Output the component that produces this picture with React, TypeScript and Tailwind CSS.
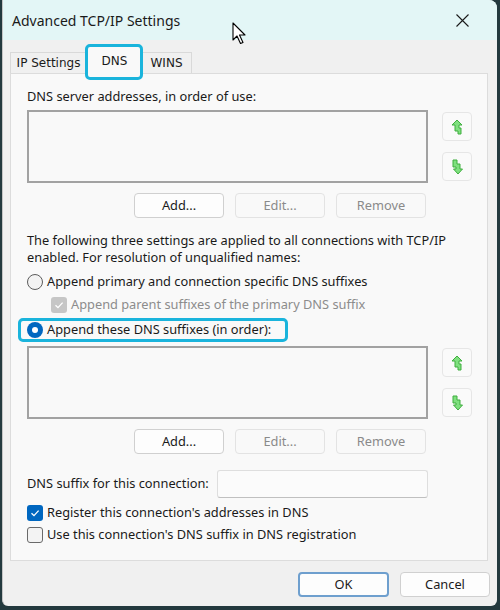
import React from "react";

const ui = { fontFamily: '"Noto Sans", "Open Sans", sans-serif' };
const tabFont = { fontFamily: '"DejaVu Sans", "Liberation Sans", sans-serif' };

function UpIcon() {
  return (
    <svg width="12" height="16" viewBox="0 0 12 16">
      <path d="M6 1 L11 6 L8 6 L8 9 L10 9 L10 15 L7 15 L7 12 L4 12 L4 6 L1 6 Z" fill="#7fe07f" stroke="#3fae3f" strokeWidth="1" strokeLinejoin="round" />
    </svg>
  );
}

function DownIcon() {
  return (
    <svg width="12" height="16" viewBox="0 0 12 16">
      <path d="M2 1 L6 1 L6 5 L9 5 L9 10 L11.5 10 L7 15 L2.5 10 L5 10 L5 8 L2 8 Z" fill="#7fe07f" stroke="#3fae3f" strokeWidth="1" strokeLinejoin="round" />
    </svg>
  );
}

function SmallBtn({ children, disabled }: { children: React.ReactNode; disabled?: boolean }) {
  return (
    <div
      className={
        "w-[90px] h-[25px] flex items-center justify-center rounded-[4px] border text-[12.8px] " +
        (disabled ? "border-[#e3e3e3] bg-[#f9f9f9] text-[#8a8a8a]" : "border-[#d0d0d0] bg-[#fdfdfd] text-[#1a1a1a]")
      }
    >
      {children}
    </div>
  );
}

function ListRow() {
  return (
    <div className="flex">
      <div className="w-[401px] h-[73px] border-2 border-[#a2a2a2] bg-[#f9f9f9]" />
      <div className="ml-[14px] flex flex-col pt-[2px] gap-[11px]">
        <div className="w-[30px] h-[29px] rounded-[4px] border border-[#e6e6e6] bg-[#fafafa] flex items-center justify-center">
          <UpIcon />
        </div>
        <div className="w-[30px] h-[29px] rounded-[4px] border border-[#e6e6e6] bg-[#fafafa] flex items-center justify-center">
          <DownIcon />
        </div>
      </div>
    </div>
  );
}

function BtnRow() {
  return (
    <div className="flex gap-[11px] ml-[107px]">
      <SmallBtn>Add...</SmallBtn>
      <SmallBtn disabled>Edit...</SmallBtn>
      <SmallBtn disabled>Remove</SmallBtn>
    </div>
  );
}

function Check() {
  return (
    <svg width="10" height="10" viewBox="0 0 10 10">
      <path d="M1.5 5.2 L4 7.6 L8.6 2.6" fill="none" stroke="#fff" strokeWidth="1.3" />
    </svg>
  );
}

export default function App() {
  return (
    <div className="w-[500px] h-[610px] bg-[#23393e] overflow-hidden relative" style={ui}>
      <div className="ml-[2px] w-[495px] h-[606px] bg-[#f0f0f0] rounded-tr-[8px] rounded-b-[6px] overflow-hidden flex flex-col border-l border-[#c4c4c4]">
        <div className="h-[40px] shrink-0 bg-[#e3f6f6] flex items-center justify-between pl-[9px] pr-[28px]">
          <span className="text-[14px] text-[#1a1a1a]">Advanced TCP/IP Settings</span>
          <svg width="13" height="13" viewBox="0 0 13 13">
            <path d="M0.5 0.5 L12.5 12.5 M12.5 0.5 L0.5 12.5" stroke="#1a1a1a" strokeWidth="1.1" />
          </svg>
        </div>

        <div className="px-[7px]">
          <div className="flex items-end h-[28px] mt-[5px] text-[12px] text-[#1a1a1a]" style={tabFont}>
            <div className="w-[77px] h-[21px] border border-b-0 border-[#d9d9d9] bg-[#f0f0f0] flex items-center justify-center">IP Settings</div>
            <div className="relative w-[55px] h-[28px] border border-b-0 border-[#d9d9d9] bg-[#f9f9f9] flex items-start justify-center pt-[5px] z-10 -mb-px">
              DNS
              <span className="absolute left-[-3px] top-[-3px] w-[58px] h-[36px] border-[3px] border-[#1ab4dc] rounded-[5px]" />
            </div>
            <div className="w-[50px] h-[21px] border border-b-0 border-l-0 border-[#d9d9d9] bg-[#f0f0f0] flex items-center justify-center">WINS</div>
          </div>

          <div className="w-[478px] h-[488px] border border-[#dcdcdc] bg-[#f9f9f9] pl-[16px] pt-[14px] text-[12.8px] text-[#1a1a1a]">
            <div className="h-[17px] leading-[17px]">DNS server addresses, in order of use:</div>
            <div className="mt-[5px]">
              <ListRow />
            </div>
            <div className="mt-[10px]">
              <BtnRow />
            </div>
            <div className="mt-[14px] leading-[17px] w-[445px]">
              The following three settings are applied to all connections with TCP/IP enabled. For resolution of unqualified names:
            </div>
            <div className="mt-[4px] h-[23px] flex items-center">
              <span className="w-[16px] h-[16px] rounded-full border border-[#5c5c5c] bg-[#f3f3f3]" />
              <span className="ml-[4px]">Append primary and connection specific DNS suffixes</span>
            </div>
            <div className="h-[23px] flex items-center pl-[24px] text-[#8c8c8c]">
              <span className="w-[16px] h-[16px] rounded-[3px] bg-[#c6c6c6] flex items-center justify-center">
                <Check />
              </span>
              <span className="ml-[4px]">Append parent suffixes of the primary DNS suffix</span>
            </div>
            <div className="mt-[2px] -ml-[9px] w-fit h-[24px] flex items-center pl-[6px] pr-[14px] border-[3px] border-[#1ab4dc] rounded-[5px]">
              <span className="w-[16px] h-[16px] rounded-full bg-[#0067c0] flex items-center justify-center">
                <span className="w-[6px] h-[6px] rounded-full bg-white" />
              </span>
              <span className="ml-[4px]">Append these DNS suffixes (in order):</span>
            </div>
            <div className="mt-[4px]">
              <ListRow />
            </div>
            <div className="mt-[10px]">
              <BtnRow />
            </div>
            <div className="mt-[16px] flex items-center">
              <span className="w-[190px]">DNS suffix for this connection:</span>
              <div className="w-[211px] h-[28px] rounded-[3px] border border-[#dedede] border-b-[#c0c0c0] bg-[#fbfbfb]" />
            </div>
            <div className="mt-[4px] h-[22px] flex items-center">
              <span className="w-[16px] h-[16px] rounded-[3px] bg-[#0067c0] flex items-center justify-center">
                <Check />
              </span>
              <span className="ml-[4px]">Register this connection's addresses in DNS</span>
            </div>
            <div className="h-[22px] flex items-center">
              <span className="w-[16px] h-[16px] rounded-[3px] border border-[#6a6a6a] bg-[#f3f3f3]" />
              <span className="ml-[4px]">Use this connection's DNS suffix in DNS registration</span>
            </div>
          </div>
        </div>

        <div className="mt-[11px] flex justify-end gap-[11px] pr-[7px] text-[12.8px] text-[#1a1a1a]">
          <div className="w-[91px] h-[25px] rounded-[4px] border-2 border-[#6e9fce] bg-[#fdfdfd] flex items-center justify-center">OK</div>
          <div className="w-[90px] h-[25px] rounded-[4px] border border-[#d0d0d0] bg-[#fdfdfd] flex items-center justify-center">Cancel</div>
        </div>
      </div>

      <svg className="absolute left-[232px] top-[22px]" width="16" height="24" viewBox="0 0 16 24">
        <path d="M1 1 L1 18 L5 14 L8.5 21.5 L11 20.5 L7.5 13 L13 13 Z" fill="#fff" stroke="#000" strokeWidth="1.1" strokeLinejoin="round" />
      </svg>
    </div>
  );
}
